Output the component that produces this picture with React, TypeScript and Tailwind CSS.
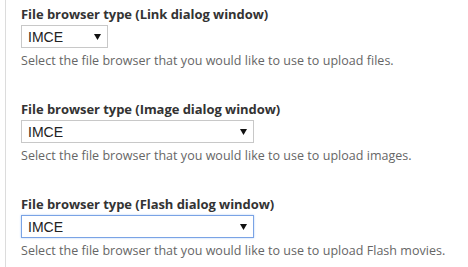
const fields = [
  { label: "File browser type (Link dialog window)", desc: "Select the file browser that you would like to use to upload files.", wide: false, focused: false },
  { label: "File browser type (Image dialog window)", desc: "Select the file browser that you would like to use to upload images.", wide: true, focused: false },
  { label: "File browser type (Flash dialog window)", desc: "Select the file browser that you would like to use to upload Flash movies.", wide: true, focused: true },
];

function FakeSelect({ wide, focused }: { wide: boolean; focused: boolean }) {
  return (
    <div
      className={
        "flex items-center justify-between h-[23px] pl-[6px] pr-[6px] bg-white border " +
        (wide ? "w-[233px] " : "w-[87px] ") +
        (focused ? "border-[#7aa3e5] shadow-[0_0_2px_#b5cff5]" : "border-[#c8c8c8]")
      }
    >
      <span className="text-[14px] leading-none text-[#222] font-['Liberation_Sans',Arial,sans-serif]">IMCE</span>
      <svg width="7" height="6" viewBox="0 0 7 6" className="mt-[1px]">
        <path d="M0 0H7L3.5 6Z" fill="#111" />
      </svg>
    </div>
  );
}

export default function App() {
  return (
    <div className="w-[468px] h-[267px] bg-white overflow-hidden font-['Open_Sans','Noto_Sans',sans-serif]">
      <div className="ml-[5px] h-full border-l border-[#dcdcdc] pl-[15px] pt-[5px] flex flex-col gap-[31px]">
        {fields.map((f, i) => (
          <div key={i} className="flex flex-col">
            <label className="text-[13px] leading-[18px] font-bold text-[#333] tracking-[-0.05px]">{f.label}</label>
            <div className="mt-[2px]">
              <FakeSelect wide={f.wide} focused={f.focused} />
            </div>
            <p className="mt-[5px] text-[12.5px] leading-[16px] text-[#666] tracking-[0.03px]">{f.desc}</p>
          </div>
        ))}
      </div>
    </div>
  );
}
